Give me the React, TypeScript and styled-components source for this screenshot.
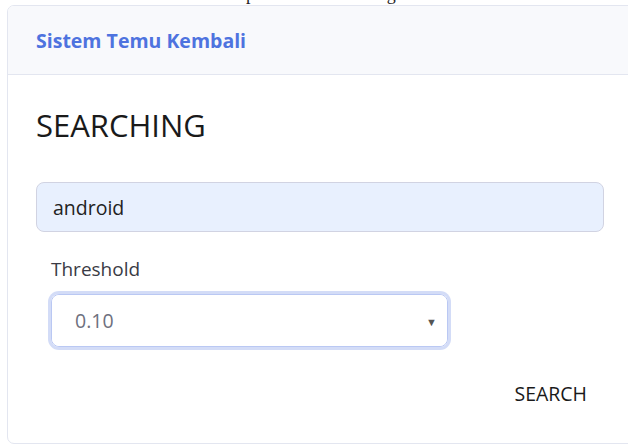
import React from 'react';
import styled, { createGlobalStyle } from 'styled-components';

const GlobalStyle = createGlobalStyle`
  html, body {
    margin: 0;
    padding: 0;
    background: #fff;
    overflow: hidden;
  }
  * { box-sizing: border-box; }
`;

const Page = styled.div`
  width: 628px;
  height: 445px;
  overflow: hidden;
`;

/* caption of the document page above, mostly scrolled out */
const Caption = styled.div`
  height: 5px;
  overflow: hidden;
`;

const CaptionText = styled.div`
  margin-top: -16px;
  padding-left: 125px;
  font-family: 'Liberation Serif', serif;
  font-size: 18px;
  line-height: 20px;
  color: #222;
  white-space: nowrap;
`;

const Card = styled.div`
  margin-left: 7px;
  width: 680px;
  height: 439px;
  border: 1px solid #e3e6f0;
  border-radius: 7px;
  background: #fff;
  overflow: hidden;
  font-family: 'Open Sans', 'Noto Sans', sans-serif;
`;

const CardHeader = styled.div`
  height: 69px;
  background: #f8f9fc;
  border-bottom: 1px solid #e3e6f0;
  display: flex;
  align-items: center;
  padding-left: 28px;
`;

const Brand = styled.h6`
  margin: 0;
  font-size: 19.5px;
  font-weight: 700;
  color: #4e73df;
`;

const CardBody = styled.div`
  padding: 30px 0 0 28px;
  width: 597px;
  display: flex;
  flex-direction: column;
`;

const Title = styled.h3`
  margin: 0;
  font-size: 31px;
  font-weight: 400;
  color: #1a1a1a;
  line-height: 40px;
`;

const SearchInput = styled.input`
  margin-top: 37px;
  height: 50px;
  width: 568px;
  border: 1px solid #d1d3e2;
  border-radius: 8px;
  background: #e8f0fe;
  padding: 0 16px;
  font-family: inherit;
  font-size: 19.5px;
  color: #222;
  outline: none;
`;

const Field = styled.div`
  margin-top: 24px;
  padding-left: 15px;
  display: flex;
  flex-direction: column;
`;

const Label = styled.label`
  font-size: 19px;
  color: #3a3b45;
  line-height: 26px;
`;

const SelectBox = styled.div`
  position: relative;
  margin-top: 12px;
  width: 397px;
  height: 53px;
  border: 1px solid #bac8f3;
  border-radius: 8px;
  box-shadow: 0 0 0 3px rgba(78, 115, 223, 0.25);
`;

const Select = styled.select`
  appearance: none;
  width: 100%;
  height: 100%;
  border: none;
  border-radius: 8px;
  background: #fff;
  padding: 0 23px;
  font-family: inherit;
  font-size: 19.5px;
  color: #6e707e;
  outline: none;
`;

const Caret = styled.span`
  position: absolute;
  right: 10px;
  top: 19px;
  font-size: 11px;
  color: #555;
  pointer-events: none;
`;

const Actions = styled.div`
  margin-top: 33px;
  display: flex;
  justify-content: flex-end;
  padding-right: 18px;
`;

const SearchButton = styled.button`
  border: none;
  background: none;
  font-family: inherit;
  font-size: 19.5px;
  color: #1a1a1a;
  padding: 0;
  cursor: pointer;
`;

export default function App() {
  return (
    <Page>
      <GlobalStyle />
      <Caption>
        <CaptionText>Gambar 4.3 Tampilan hasil clustering data</CaptionText>
      </Caption>
      <Card>
        <CardHeader>
          <Brand>Sistem Temu Kembali</Brand>
        </CardHeader>
        <CardBody>
          <Title>SEARCHING</Title>
          <SearchInput defaultValue="android" />
          <Field>
            <Label>Threshold</Label>
            <SelectBox>
              <Select defaultValue="0.10">
                <option value="0.10">0.10</option>
                <option value="0.20">0.20</option>
                <option value="0.30">0.30</option>
              </Select>
              <Caret>▼</Caret>
            </SelectBox>
          </Field>
          <Actions>
            <SearchButton>SEARCH</SearchButton>
          </Actions>
        </CardBody>
      </Card>
    </Page>
  );
}
